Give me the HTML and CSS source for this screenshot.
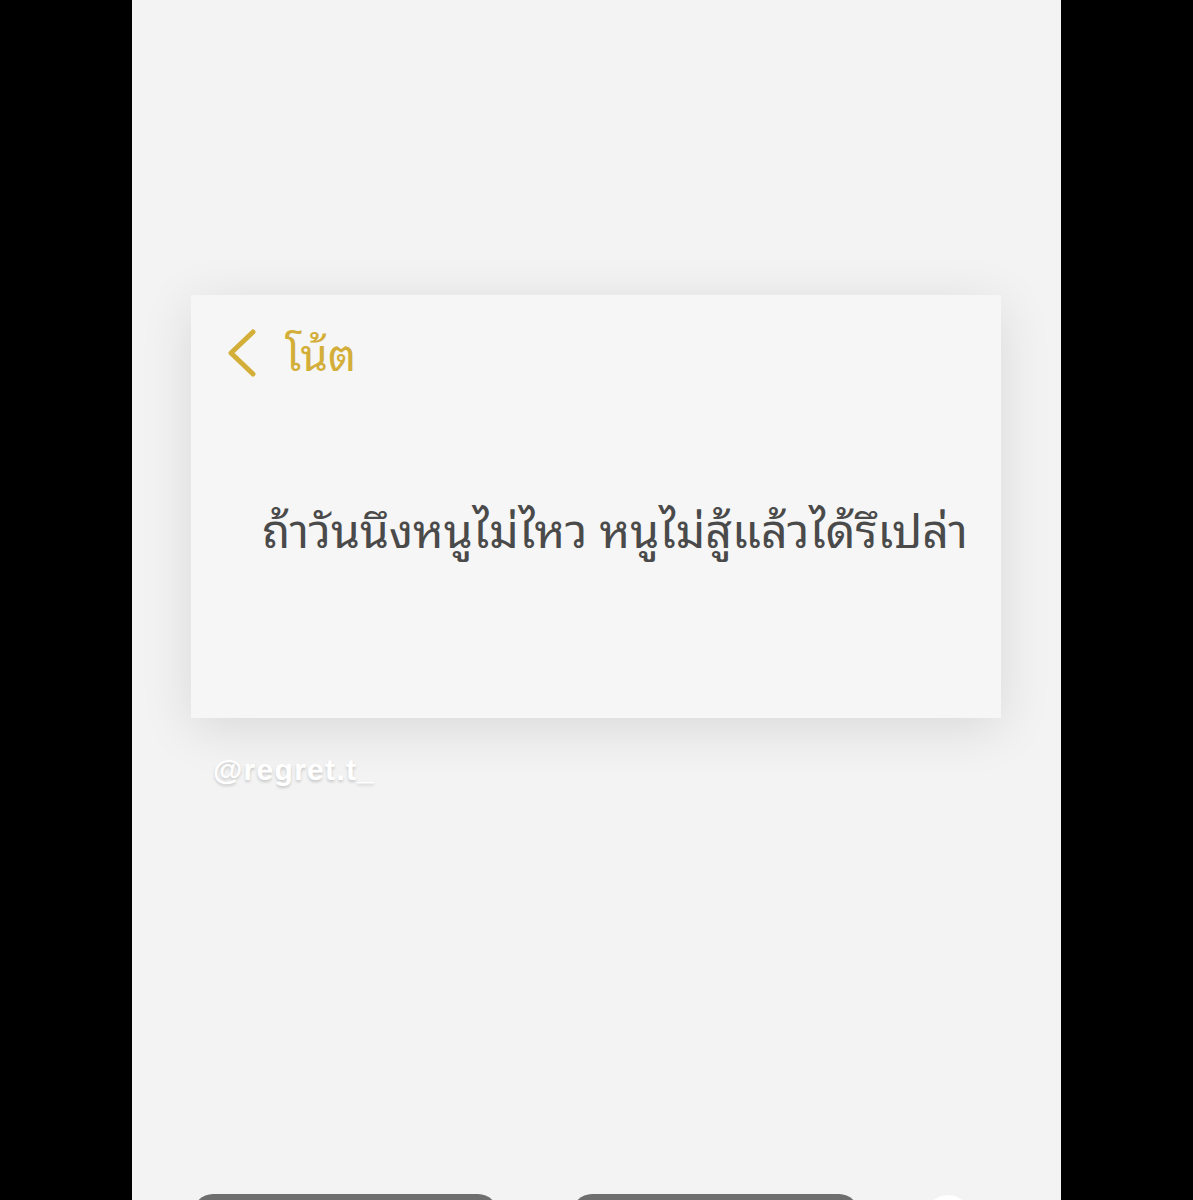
FILE: index.html
```html
<!DOCTYPE html>
<html lang="th">
  <head>
    <meta charset="UTF-8" />
    <meta name="viewport" content="width=device-width, initial-scale=1.0" />
    <title>โน้ต</title>
    <link rel="stylesheet" href="styles.css">
  </head>
  <body>
    <div class="screen">
      <div class="note-card">
        <div class="note-header">
          <svg class="back-icon" width="32" height="50" viewBox="0 0 32 50">
            <path d="M28 4 L6 25 L28 46" fill="none" stroke="#d3ae38" stroke-width="5" stroke-linecap="round" stroke-linejoin="round" />
          </svg>
          <span class="back-label">โน้ต</span>
        </div>
        <p class="note-text">ถ้าวันนึงหนูไม่ไหว หนูไม่สู้แล้วได้รึเปล่า</p>
      </div>
      <div class="watermark">@regret.t_</div>
      <div class="bottom-bar">
        <div class="pill pill-wide"></div>
        <div class="pill pill-mid"></div>
        <div class="dot"></div>
      </div>
    </div>
  </body>
</html>
```

FILE: styles.css
```css
html, body {
  margin: 0;
  height: 100%;
}
body {
  background-color: #000;
  font-family: "Noto Sans Thai Looped", "Noto Serif Thai", "Noto Sans Thai", "Noto Sans", sans-serif;
  overflow: hidden;
}
.screen {
  width: 929px;
  height: 1200px;
  margin-left: 132px;
  background-color: #f3f3f3;
  display: flex;
  flex-direction: column;
  position: relative;
  overflow: hidden;
}
.note-card {
  margin: 295px 0 0 59px;
  width: 810px;
  height: 423px;
  background-color: #f6f6f6;
  box-shadow: 0 10px 50px rgba(0, 0, 0, 0.11);
  box-sizing: border-box;
  padding: 33px 0 0 34px;
}
.note-header {
  display: flex;
  align-items: center;
  gap: 28px;
  height: 50px;
}
.back-label {
  color: #d3ae38;
  font-size: 44px;
  line-height: 1;
  margin-top: -5px;
}
.note-text {
  margin: 122px 0 0 37px;
  color: #4a4a4a;
  font-size: 46.5px;
  line-height: 1.2;
  white-space: nowrap;
}
.watermark {
  margin: 35px 0 0 81px;
  color: #fff;
  font-family: "Liberation Sans", Arial, sans-serif;
  font-weight: bold;
  font-size: 30px;
  letter-spacing: 1.3px;
  text-shadow: 0 2px 3px rgba(0, 0, 0, 0.18);
}
.bottom-bar {
  position: absolute;
  left: 0;
  right: 0;
  top: 1194px;
  display: flex;
  align-items: flex-start;
}
.pill {
  height: 40px;
  background-color: #6e6e6e;
  border-radius: 20px;
}
.pill-wide {
  margin-left: 61px;
  width: 305px;
}
.pill-mid {
  margin-left: 74px;
  width: 287px;
}
.dot {
  margin: 1px 0 0 66px;
  width: 46px;
  height: 46px;
  border-radius: 50%;
  background-color: #fff;
}
```
